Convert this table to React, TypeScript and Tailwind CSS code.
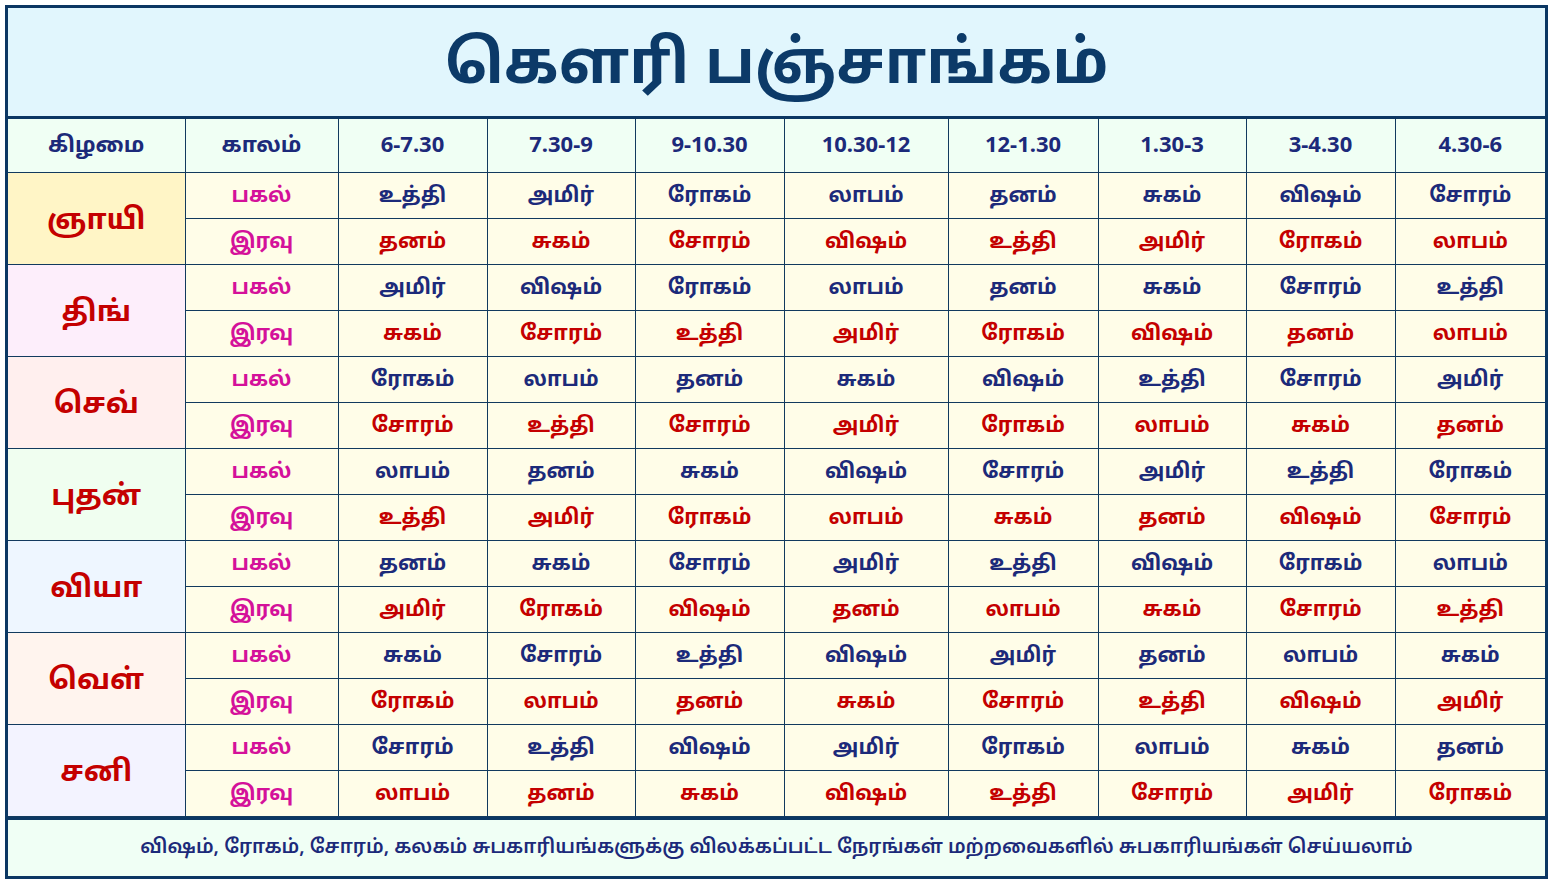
const times = ['6-7.30', '7.30-9', '9-10.30', '10.30-12', '12-1.30', '1.30-3', '3-4.30', '4.30-6'];
const widths = ['w-[177px]', 'w-[153px]', 'w-[149px]', 'w-[148px]', 'w-[149px]', 'w-[164px]', 'w-[150px]', 'w-[148px]', 'w-[149px]', 'w-[150px]'];

const days = [
  {
    name: 'ஞாயி',
    bg: 'bg-[#fff5c6]',
    day: ['உத்தி', 'அமிர்', 'ரோகம்', 'லாபம்', 'தனம்', 'சுகம்', 'விஷம்', 'சோரம்'],
    night: ['தனம்', 'சுகம்', 'சோரம்', 'விஷம்', 'உத்தி', 'அமிர்', 'ரோகம்', 'லாபம்'],
  },
  {
    name: 'திங்',
    bg: 'bg-[#fdeefb]',
    day: ['அமிர்', 'விஷம்', 'ரோகம்', 'லாபம்', 'தனம்', 'சுகம்', 'சோரம்', 'உத்தி'],
    night: ['சுகம்', 'சோரம்', 'உத்தி', 'அமிர்', 'ரோகம்', 'விஷம்', 'தனம்', 'லாபம்'],
  },
  {
    name: 'செவ்',
    bg: 'bg-[#ffefee]',
    day: ['ரோகம்', 'லாபம்', 'தனம்', 'சுகம்', 'விஷம்', 'உத்தி', 'சோரம்', 'அமிர்'],
    night: ['சோரம்', 'உத்தி', 'சோரம்', 'அமிர்', 'ரோகம்', 'லாபம்', 'சுகம்', 'தனம்'],
  },
  {
    name: 'புதன்',
    bg: 'bg-[#f0fef0]',
    day: ['லாபம்', 'தனம்', 'சுகம்', 'விஷம்', 'சோரம்', 'அமிர்', 'உத்தி', 'ரோகம்'],
    night: ['உத்தி', 'அமிர்', 'ரோகம்', 'லாபம்', 'சுகம்', 'தனம்', 'விஷம்', 'சோரம்'],
  },
  {
    name: 'வியா',
    bg: 'bg-[#eef6ff]',
    day: ['தனம்', 'சுகம்', 'சோரம்', 'அமிர்', 'உத்தி', 'விஷம்', 'ரோகம்', 'லாபம்'],
    night: ['அமிர்', 'ரோகம்', 'விஷம்', 'தனம்', 'லாபம்', 'சுகம்', 'சோரம்', 'உத்தி'],
  },
  {
    name: 'வெள்',
    bg: 'bg-[#fff4ee]',
    day: ['சுகம்', 'சோரம்', 'உத்தி', 'விஷம்', 'அமிர்', 'தனம்', 'லாபம்', 'சுகம்'],
    night: ['ரோகம்', 'லாபம்', 'தனம்', 'சுகம்', 'சோரம்', 'உத்தி', 'விஷம்', 'அமிர்'],
  },
  {
    name: 'சனி',
    bg: 'bg-[#f3f3ff]',
    day: ['சோரம்', 'உத்தி', 'விஷம்', 'அமிர்', 'ரோகம்', 'லாபம்', 'சுகம்', 'தனம்'],
    night: ['லாபம்', 'தனம்', 'சுகம்', 'விஷம்', 'உத்தி', 'சோரம்', 'அமிர்', 'ரோகம்'],
  },
];

const cell = 'border border-[#123a5e] text-center align-middle';

export default function App() {
  return (
    <div className="p-[5px] bg-white font-['Noto_Sans','Noto_Sans_Tamil',sans-serif]">
      <div className="border-[3px] border-[#0b3763]">
        {/* Title */}
        <div className="h-[111px] bg-[#e1f6fd] flex items-center justify-center border-b-[3px] border-[#0b3763]">
          <h1 className="text-[60px] font-bold text-[#0c3a68] leading-none pb-1">கௌரி பஞ்சாங்கம்</h1>
        </div>

        <table className="w-full table-fixed border-collapse">
          <colgroup>
            {widths.map((w, i) => (
              <col key={i} className={w} />
            ))}
          </colgroup>
          <thead>
            <tr className="h-[53px] bg-[#f0fff4]">
              <th className={`${cell} border-t-0 border-l-0 pb-1 text-[22px] font-bold text-[#1c2a7a]`}>கிழமை</th>
              <th className={`${cell} border-t-0 pb-1 text-[22px] font-bold text-[#1c2a7a]`}>காலம்</th>
              {times.map((t, i) => (
                <th
                  key={t}
                  className={`${cell} border-t-0 pb-1 ${i === times.length - 1 ? 'border-r-0' : ''} text-[22px] font-bold text-[#1c2a7a]`}>
                  {t}
                </th>
              ))}
            </tr>
          </thead>
          <tbody>
            {days.map((d) => (
              <>
                <tr key={d.name + 'a'} className="h-[46px]">
                  <td rowSpan={2} className={`${cell} border-l-0 ${d.bg} text-[29px] font-bold text-[#c40000]`}>
                    {d.name}
                  </td>
                  <td className={`${cell} bg-[#fffde8] text-[21px] font-bold text-[#d4119a]`}>பகல்</td>
                  {d.day.map((v, i) => (
                    <td
                      key={i}
                      className={`${cell} ${i === 7 ? 'border-r-0' : ''} bg-[#fffde8] text-[21px] font-bold text-[#1c2a7a]`}>
                      {v}
                    </td>
                  ))}
                </tr>
                <tr key={d.name + 'b'} className="h-[46px]">
                  <td className={`${cell} bg-[#fffde8] text-[21px] font-bold text-[#d4119a]`}>இரவு</td>
                  {d.night.map((v, i) => (
                    <td
                      key={i}
                      className={`${cell} ${i === 7 ? 'border-r-0' : ''} bg-[#fffde8] text-[21px] font-bold text-[#c40000]`}>
                      {v}
                    </td>
                  ))}
                </tr>
              </>
            ))}
          </tbody>
        </table>

        {/* Footer note */}
        <div className="h-[59px] bg-[#f0fff5] border-t-[3px] border-[#0b3763] flex items-center justify-center">
          <p className="text-[19.5px] font-semibold text-[#1c2a7a] pb-1">
            விஷம், ரோகம், சோரம், கலகம் சுபகாரியங்களுக்கு விலக்கப்பட்ட நேரங்கள் மற்றவைகளில் சுபகாரியங்கள் செய்யலாம்
          </p>
        </div>
      </div>
    </div>
  );
}
